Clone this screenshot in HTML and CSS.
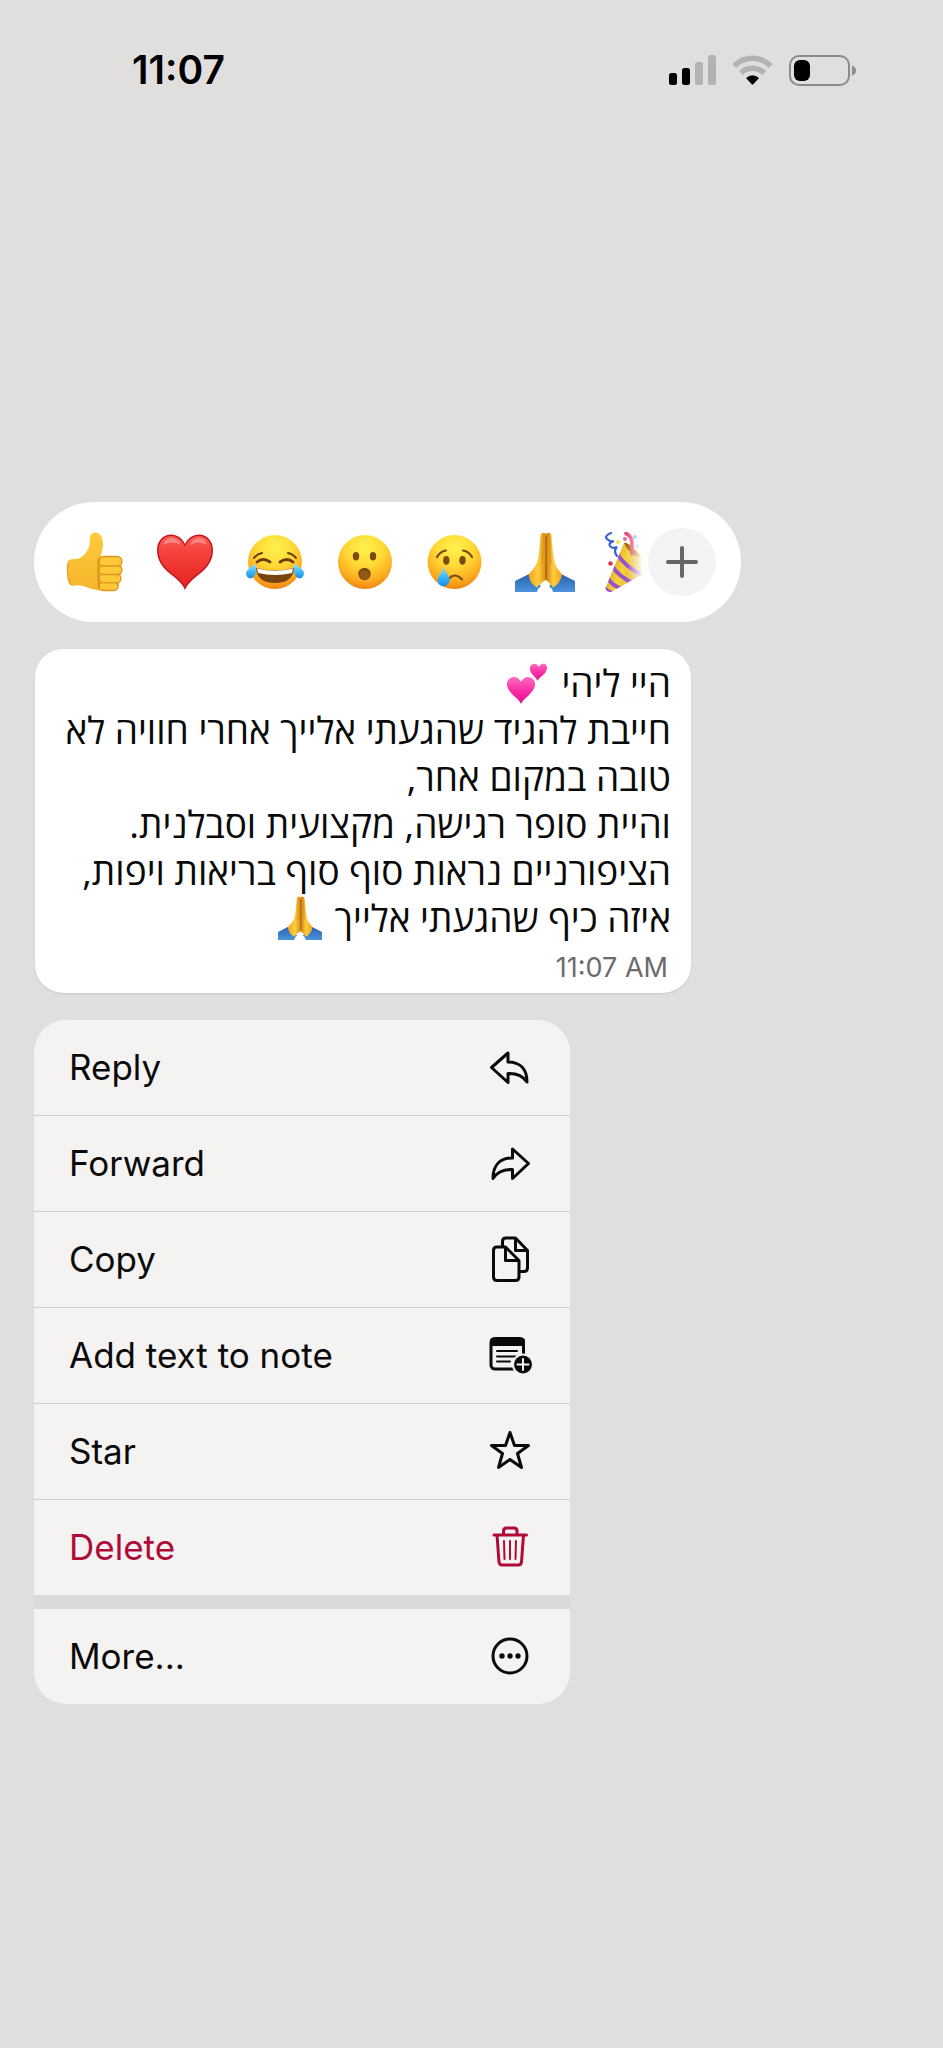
FILE: index.html
```html
<!DOCTYPE html>
<html lang="en">
<head>
<meta charset="utf-8">
<meta name="viewport" content="width=device-width, initial-scale=1">
<title>Message options</title>
<link rel="stylesheet" href="styles.css">
</head>
<body>
<svg class="defs" aria-hidden="true">
  <defs>
    <radialGradient id="face" cx="0.5" cy="0.24" r="0.76">
      <stop offset="0" stop-color="#fff24f"/>
      <stop offset="0.45" stop-color="#ffd935"/>
      <stop offset="0.8" stop-color="#fbac1f"/>
      <stop offset="1" stop-color="#ee8512"/>
    </radialGradient>
    <linearGradient id="skin" x1="0" y1="0" x2="0" y2="1">
      <stop offset="0" stop-color="#ffcb3d"/>
      <stop offset="1" stop-color="#f5b52c"/>
    </linearGradient>
    <linearGradient id="hand-left" x1="0" y1="0" x2="1" y2="0">
      <stop offset="0" stop-color="#f0a020"/>
      <stop offset="0.55" stop-color="#ffcf3b"/>
      <stop offset="1" stop-color="#d98a16"/>
    </linearGradient>
    <linearGradient id="hand-right" x1="1" y1="0" x2="0" y2="0">
      <stop offset="0" stop-color="#f0a020"/>
      <stop offset="0.55" stop-color="#ffcf3b"/>
      <stop offset="1" stop-color="#c97b12"/>
    </linearGradient>
    <linearGradient id="sleeve" x1="0" y1="0" x2="0" y2="1">
      <stop offset="0" stop-color="#2a62ab"/>
      <stop offset="1" stop-color="#4a93dc"/>
    </linearGradient>
    <linearGradient id="red" x1="0" y1="0" x2="0" y2="1">
      <stop offset="0" stop-color="#fb5a58"/>
      <stop offset="0.35" stop-color="#f5403c"/>
      <stop offset="1" stop-color="#e3241f"/>
    </linearGradient>
    <linearGradient id="pink" x1="0" y1="0" x2="0" y2="1">
      <stop offset="0" stop-color="#ff6cc0"/>
      <stop offset="0.5" stop-color="#f92fa6"/>
      <stop offset="1" stop-color="#e0108c"/>
    </linearGradient>
    <linearGradient id="tear" x1="0" y1="0" x2="0" y2="1">
      <stop offset="0" stop-color="#9be4ff"/>
      <stop offset="0.6" stop-color="#35b3f7"/>
      <stop offset="1" stop-color="#1b8fe4"/>
    </linearGradient>
    <linearGradient id="cone" x1="0" y1="0" x2="1" y2="0.4">
      <stop offset="0" stop-color="#c88a14"/>
      <stop offset="0.5" stop-color="#f6d13c"/>
      <stop offset="1" stop-color="#d9a92a"/>
    </linearGradient>
    <clipPath id="cone-clip"><path d="M19 11C27 10 46 32 45 38L6 60Q1 60 0.500 56Z"/></clipPath>
    <symbol id="pray" viewBox="0 0 60 60">
      <path d="M0 49L14 42L26 54Q23 56 22 60H0Z" fill="url(#sleeve)"/>
      <path d="M60 49L46 42L34 54Q37 56 38 60H60Z" fill="url(#sleeve)"/>
      <path d="M30 1Q26 0 25.500 4L24 21Q23 31 19 36Q16 39 13.500 43Q15 52 22 55.500Q25 51 31 48V2Z" fill="url(#hand-left)"/>
      <path d="M32 1Q36 0 36.500 4L38 21Q39 31 42 36Q45 39 47 43Q45 52 38 55.500Q35 51 31 48V2Z" fill="url(#hand-right)"/>
      <path d="M31 4V47" fill="none" stroke="#a85f0c" stroke-width="1.200"/>
      <path d="M28 2Q28 20 27 32M34 2Q35 20 36 32" fill="none" stroke="#d88a18" stroke-width="0.800"/>
    </symbol>
  </defs>
</svg>

<header class="status">
  <time class="status-time">11:07</time>
  <div class="status-icons">
    <svg width="47" height="30" viewBox="0 0 47 30" role="img" aria-label="Signal">
      <rect y="18" width="8" height="12" rx="2.500"/>
      <rect x="13" y="13" width="8" height="17" rx="2.500"/>
      <rect x="26" y="7" width="8" height="23" rx="2.500" fill="#b3b3b2"/>
      <rect x="39" y="0" width="8" height="30" rx="2.500" fill="#b3b3b2"/>
    </svg>
    <svg width="41" height="30" viewBox="0 0 41 30" role="img" aria-label="Wi-Fi">
      <path d="M2.300 11A25.500 25.500 0 0 1 38.700 11" fill="none" stroke="#b3b3b2" stroke-width="5.500"/>
      <path d="M8.800 18A17 17 0 0 1 32.200 18" fill="none" stroke="#b3b3b2" stroke-width="5.500"/>
      <path d="M14 23Q20.500 17.500 27 23L21.500 29Q20.500 30 19.500 29Z"/>
    </svg>
    <svg width="67" height="31" viewBox="0 0 67 31" role="img" aria-label="Battery">
      <rect x="1" y="1" width="59" height="29" rx="9" fill="none" stroke="#8b8b8a" stroke-width="2"/>
      <rect x="5" y="5" width="16" height="21" rx="6"/>
      <path d="M63 10.500Q67 12 67 15.500T63 20.500Z" fill="#8b8b8a"/>
    </svg>
  </div>
</header>

<main class="content">
  <section class="reactions" aria-label="Reactions">
    <div class="emoji-list">
      <button class="emoji" aria-label="Thumbs up">
        <svg viewBox="0 0 60 60">
          <path d="M3 29Q4 26.500 12 27C18 26 23 19 24.500 13C25 8 24 1 30 0.500C36 0 38.500 8 38 14C37.500 19 36 22 36 25L52 24Q57 25 57 30L54 53Q53 59 47 59Q31 59 24 56Q15 52 8 54Q2 53 2 42Z" fill="url(#skin)"/>
          <g fill="#ffc838" stroke="#dd9520" stroke-width="1.300">
            <rect x="34" y="50" width="19" height="8.500" rx="4.250"/>
            <rect x="34" y="42" width="22" height="8.800" rx="4.400"/>
            <rect x="34" y="33.500" width="23" height="9" rx="4.500"/>
            <rect x="34" y="24.500" width="23" height="9.500" rx="4.750"/>
          </g>
          <path d="M35 26Q32 28 33.500 33Q32 44 34.500 56" fill="none" stroke="#d98f1b" stroke-width="1.500"/>
          <path d="M3 31Q1 42 6 53" fill="none" stroke="#eaa526" stroke-width="1.500"/>
        </svg>
      </button>
      <button class="emoji" aria-label="Heart">
        <svg viewBox="0 0 60 60">
          <path d="M30 58Q28 52 18 44C7 36 2 28 2 18C2 9 8 2.500 16 2.500C22 2.500 27 6 30 12C33 6 38 2.500 44 2.500C52 2.500 58 9 58 18C58 28 53 36 42 44Q32 52 30 58Z" fill="#c4151b"/>
          <path d="M30 55Q28 50 19 43C8 35 3.500 27 3.500 18C3.500 10 9 4 16 4C22 4 27 8 30 14.500C33 8 38 4 44 4C51 4 56.500 10 56.500 18C56.500 27 52 35 41 43Q32 50 30 55Z" fill="url(#red)"/>
          <path d="M8 13Q10 6 17 6Q24 7 26 13Q17 8 8 13M35 13Q38 6 44 6Q51 7 52 13Q43 8 35 13" fill="#fff" opacity="0.300"/>
        </svg>
      </button>
      <button class="emoji" aria-label="Tears of joy">
        <svg viewBox="0 0 60 60">
          <circle cx="30" cy="30" r="27" fill="url(#face)"/>
          <path d="M11 36Q30 41 49 36Q48 51 30 51Q12 51 11 36" fill="#7a4310"/>
          <path d="M12 36.500Q30 41 48 36.500L47 41Q30 45 13 41Z" fill="#fff"/>
          <path d="M12 30Q18 25 25 30M35 30Q42 25 48 30" fill="none" stroke="#6b3c0d" stroke-width="2.800" stroke-linecap="round"/>
          <path d="M9 26Q12 22 17 21M43 21Q48 22 51 26" fill="none" stroke="#6b3c0d" stroke-width="2" stroke-linecap="round"/>
          <path d="M11 32Q12 45 6 46.500Q1 46 1 41Q2 36 11 32M49 32Q48 45 54 46.500Q59 46 59 41Q58 36 49 32" fill="url(#tear)"/>
        </svg>
      </button>
      <button class="emoji" aria-label="Surprised">
        <svg viewBox="0 0 60 60">
          <circle cx="30" cy="30" r="27" fill="url(#face)"/>
          <g fill="#7d4a10">
            <ellipse cx="21" cy="24.300" rx="3.200" ry="4.200"/>
            <ellipse cx="38" cy="24.300" rx="3.200" ry="4.200"/>
            <ellipse cx="29.500" cy="42" rx="6.200" ry="6.200"/>
          </g>
          <ellipse cx="29.500" cy="43" rx="4.800" ry="4.600" fill="#955a12"/>
        </svg>
      </button>
      <button class="emoji" aria-label="Sad">
        <svg viewBox="0 0 60 60">
          <circle cx="29.500" cy="30" r="27" fill="url(#face)"/>
          <g fill="#7d4a10">
            <ellipse cx="21.300" cy="28.300" rx="3.200" ry="4.400"/>
            <ellipse cx="37.500" cy="28.300" rx="3.200" ry="4.400"/>
          </g>
          <path d="M12 25Q15 19.500 21 18.500M38 18.500Q44 19.500 47 25M24 46.500Q30 40 37 47.500" fill="none" stroke="#7d4a10" stroke-width="2.200" stroke-linecap="round"/>
          <path d="M18.700 34Q19.500 39 23 43Q26 48 23.500 51.500Q21 54.500 18 54.300Q12.500 53.500 12.500 48Q13 44 16 40.500Q18 38 18.700 34" fill="url(#tear)"/>
        </svg>
      </button>
      <button class="emoji" aria-label="Folded hands">
        <svg><use href="#pray"/></svg>
      </button>
      <button class="emoji" aria-label="Party popper">
        <svg viewBox="0 0 60 60">
          <path d="M19 11C27 10 46 32 45 38L6 60Q1 60 0.500 56Z" fill="url(#cone)"/>
          <g clip-path="url(#cone-clip)" fill="none" stroke="#9a4fd0" stroke-width="3.800">
            <path d="M11 20Q20 36 40 44M6 32Q14 46 29 51M2 45Q8 55 18 57M-2 53Q1 60 8 61"/>
          </g>
          <path d="M19 11C22 9 30 17 35 25Q30 24 26 21Q21 16 19 11" fill="#a56a12"/>
          <path d="M6 1Q-1 4 2 7T9 9Q3 11 5 14T12 15Q8 19 12 24" fill="none" stroke="#3a62d6" stroke-width="2.200" stroke-linecap="round"/>
          <path d="M21 1.500Q27 4 27 11T27 22" fill="none" stroke="#ea4670" stroke-width="3.600" stroke-linecap="round"/>
          <circle cx="13" cy="10" r="2" fill="#f8e04a"/>
          <circle cx="20" cy="7" r="2" fill="#e16b96"/>
          <circle cx="30" cy="5" r="2" fill="#69a9ef"/>
          <circle cx="32" cy="14" r="1.700" fill="#8fc1f4"/>
          <circle cx="5.500" cy="31.500" r="2.200" fill="#d9304e"/>
        </svg>
      </button>
    </div>
    <button class="add" aria-label="More reactions">
      <svg width="32" height="32" viewBox="0 0 32 32"><path d="M16 2V30M2 16H30" fill="none" stroke="#666" stroke-width="4" stroke-linecap="round"/></svg>
    </button>
  </section>

  <article class="bubble">
    <p class="message" lang="he" dir="rtl">היי ליהי <svg class="inline-emoji" viewBox="0 0 44 44" role="img" aria-label="Two hearts">
        <path d="M16 43Q15 40 9 35C4 30 2 27 2 23C2 19 5 16 9 16C12 16 15 18 16 21C17 18 20 16 23 16C27 16 30 19 30 23C30 27 28 30 23 35Q17 40 16 43Z" fill="url(#pink)"/>
        <path d="M32.500 20Q32 18 28 14Q24 10 25 6Q27 2 31 3Q33 4 33.500 6Q35 3 39 2.500Q43 4 42 8Q41 12 37 15Q33 18 32.500 20Z" fill="url(#pink)"/>
      </svg><br>חייבת להגיד שהגעתי אלייך אחרי חוויה לא<br>טובה במקום אחר,<br>והיית סופר רגישה, מקצועית וסבלנית.<br>הציפורניים נראות סוף סוף בריאות ויפות,<br>איזה כיף שהגעתי אלייך <svg class="inline-emoji" viewBox="0 0 60 60" role="img" aria-label="Folded hands"><use href="#pray"/></svg></p>
    <time class="sent">11:07 AM</time>
  </article>

  <nav class="menu" aria-label="Message actions">
    <div class="group">
      <button class="item"><span>Reply</span>
        <svg class="icon" viewBox="0 0 48 48"><path d="M5.500 24.500L22 10V19C34 19 41 26 41 39Q35 30 22 30.500V39.500Z"/></svg>
      </button>
      <button class="item"><span>Forward</span>
        <svg class="icon" viewBox="0 0 48 48"><path d="M42.500 24.500L26.500 10V19C14 19 7 26 7 39.500Q13 30 26.500 30.500V39.500Z"/></svg>
      </button>
      <button class="item"><span>Copy</span>
        <svg class="icon" viewBox="0 0 48 48"><path d="M19.500 12H11Q7.500 12 7.500 15.500V42Q7.500 45.500 11 45.500H29.500Q33 45.500 33 42V25.500ZM19.500 12V25.500H33M16.500 11V6.500Q16.500 3 20 3H29.500L41.500 15.500V33Q41.500 36.500 38 36.500H33M29.500 3V15.500H41.500"/></svg>
      </button>
      <button class="item"><span>Add text to note</span>
        <svg class="icon" viewBox="0 0 48 48">
          <rect x="5" y="7.500" width="32.500" height="30.500" rx="4"/>
          <path class="solid" d="M4 15V10Q4 6.500 8 6.500H35Q39 6.500 39 10V15Z"/>
          <path class="thin" d="M11 20H31M11 25.500H30M11 30.500H24"/>
          <circle class="cutout" cx="37" cy="33.500" r="11"/>
          <circle class="solid" cx="37" cy="33.500" r="9"/>
          <path class="plus" d="M37 28V39M31.500 33.500H42.500"/>
        </svg>
      </button>
      <button class="item"><span>Star</span>
        <svg class="icon" viewBox="0 0 48 48"><path d="M24 5.500L28.500 18.500H42.500L31.500 26.500L35.500 40.500L24 32.500L12.500 40.500L16.500 26.500L5.500 18.500H19.500Z"/></svg>
      </button>
      <button class="item danger"><span>Delete</span>
        <svg class="icon" viewBox="0 0 48 48">
          <path d="M8 12H40.500M17.500 12V8Q17.500 5 20.500 5H28Q31 5 31 8V12M11 12L13 39Q13.500 42 16 42H32.500Q35 42 35.500 39L37.500 12"/>
          <path class="thin" d="M18 18L18.500 36M24 18V36M30 18L29.500 36"/>
        </svg>
      </button>
    </div>
    <div class="group">
      <button class="item"><span>More...</span>
        <svg class="icon" viewBox="0 0 48 48">
          <circle cx="24" cy="24" r="17"/>
          <g class="solid"><circle cx="16" cy="24" r="2.700"/><circle cx="24" cy="24" r="2.700"/><circle cx="32" cy="24" r="2.700"/></g>
        </svg>
      </button>
    </div>
  </nav>
</main>
</body>
</html>
```
FILE: styles.css
```css
* {
  box-sizing: border-box;
}

body {
  margin: 0;
  min-height: 100vh;
  background: #e0dfdd;
  color: #0a0a0a;
  font-family: Inter, "Liberation Sans", sans-serif;
}

button {
  margin: 0;
  padding: 0;
  border: 0;
  background: none;
  color: inherit;
  font: inherit;
  cursor: pointer;
}

svg {
  display: block;
}

.defs {
  position: absolute;
  width: 0;
  height: 0;
}

.status {
  display: flex;
  align-items: center;
  justify-content: space-between;
  padding: 46px 87px 0 132px;
}

.status-time {
  font-size: 39px;
  line-height: 48px;
  font-weight: 600;
  color: #000;
}

.status-icons {
  display: flex;
  align-items: center;
  gap: 16px;
}

.content {
  display: flex;
  flex-direction: column;
  align-items: flex-start;
  padding: 408px 34px 0;
}

.reactions {
  display: flex;
  align-items: center;
  gap: 5px;
  width: 100%;
  max-width: 707px;
  height: 120px;
  padding: 0 25px 0 31px;
  border-radius: 60px;
  background: #fff;
}

.emoji-list {
  display: flex;
  flex: 1;
  gap: 30px;
  min-width: 0;
  overflow: hidden;
  mask-image: linear-gradient(to left, transparent 0, #000 16px);
}

.emoji {
  flex: none;
  width: 60px;
  height: 60px;
}

.emoji svg {
  width: 60px;
  height: 60px;
}

.add {
  display: grid;
  place-items: center;
  flex: none;
  width: 68px;
  height: 68px;
  border-radius: 50%;
  background: #f3f3f3;
}

.bubble {
  display: flex;
  flex-direction: column;
  width: 656px;
  max-width: 100%;
  margin: 27px 0 0 1px;
  padding: 10px 20px 3px;
  border-radius: 28px;
  background: #fff;
  box-shadow: 0 1px 2px #0000001a;
}

.message {
  margin: 0;
  font-family: "Open Sans", "Liberation Sans", sans-serif;
  font-size: 37px;
  line-height: 47px;
}

.inline-emoji {
  display: inline-block;
  width: 44px;
  height: 44px;
  margin-block: -10px;
  margin-inline-start: 3px;
  vertical-align: 2px;
}

.sent {
  align-self: flex-end;
  margin-top: 5px;
  padding-right: 3px;
  font-size: 27px;
  line-height: 44px;
  color: #6b6b6b;
}

.menu {
  display: flex;
  flex-direction: column;
  gap: 14px;
  width: 100%;
  max-width: 536px;
  margin-top: 27px;
  border-radius: 32px;
  overflow: hidden;
  background: #dadad8;
}

.group {
  background: #f4f3f2;
}

.item {
  display: flex;
  align-items: center;
  justify-content: space-between;
  width: 100%;
  padding: 23px 36px 24px 35px;
  border-bottom: 1px solid #cfcecd;
  font-size: 35px;
  line-height: 48px;
  text-align: left;
}

.item:last-child {
  border-bottom: 0;
}

.danger {
  color: #b00b38;
}

.icon {
  width: 48px;
  height: 48px;
  fill: none;
  stroke: currentColor;
  stroke-width: 3;
  stroke-linecap: round;
  stroke-linejoin: round;
}

.icon .solid {
  fill: currentColor;
  stroke: none;
}

.icon .thin {
  stroke-width: 2;
}

.icon .cutout {
  fill: #f4f3f2;
  stroke: none;
}

.icon .plus {
  stroke: #f4f3f2;
  stroke-width: 2;
}
```
